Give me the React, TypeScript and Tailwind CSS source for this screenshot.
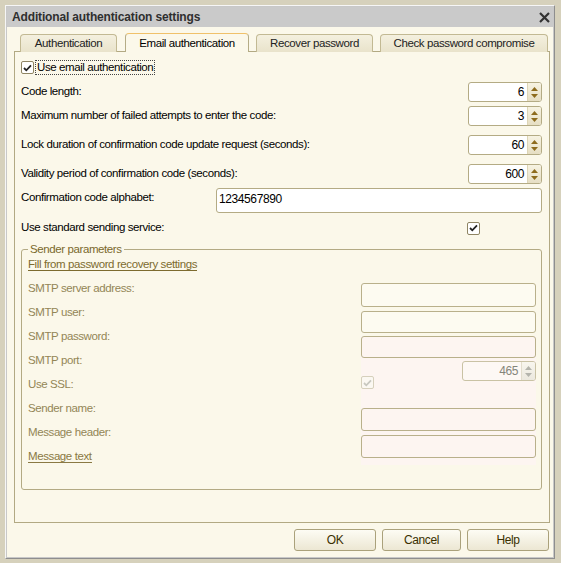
import type { ReactNode } from 'react'

const tabs = [
  { label: 'Authentication', w: 'w-[97px]' },
  { label: 'Email authentication', w: 'w-[124px]', active: true },
  { label: 'Recover password', w: 'w-[117px]' },
  { label: 'Check password compromise', w: 'w-[168px]' },
]

function Arrows({ disabled }: { disabled?: boolean }) {
  const c = disabled ? '#b4b4ac' : '#8d6b1d'
  return (
    <div
      className={
        'flex w-[14px] flex-col items-center justify-center gap-[3px] border-l ' +
        (disabled
          ? 'border-[#e2ddcc] bg-gradient-to-b from-[#f8f6ee] to-[#ebe8de]'
          : 'border-[#ddd5b6] bg-gradient-to-b from-[#f7f3e2] to-[#e6dec3]')
      }
    >
      <svg width="7" height="4" viewBox="0 0 7 4">
        <path d="M0 4 L3.5 0 L7 4 Z" fill={c} />
      </svg>
      <svg width="7" height="4" viewBox="0 0 7 4">
        <path d="M0 0 L3.5 4 L7 0 Z" fill={c} />
      </svg>
    </div>
  )
}

function Spinner({ value, disabled }: { value: string; disabled?: boolean }) {
  return (
    <div
      className={
        'flex h-[20px] w-[74px] overflow-hidden rounded-[3px] border ' +
        (disabled ? 'border-[#c9c2a4] bg-[#fdf8f4]' : 'border-[#b4ab84] bg-white')
      }
    >
      <div
        className={
          'flex-1 pr-[3px] text-right text-[12px] leading-[18px] ' +
          (disabled ? 'text-[#85857a]' : 'text-black')
        }
      >
        {value}
      </div>
      <Arrows disabled={disabled} />
    </div>
  )
}

function Check({ disabled }: { disabled?: boolean }) {
  return (
    <div
      className={
        'flex h-[13px] w-[13px] shrink-0 items-center justify-center rounded-[2px] border ' +
        (disabled ? 'border-[#d6d0bc] bg-[#fbf8f2]' : 'border-[#8f8563] bg-white')
      }
    >
      <svg width="9" height="8" viewBox="0 0 9 8">
        <path
          d="M1 4 L3.3 6.3 L8 1.3"
          fill="none"
          stroke={disabled ? '#c8c8c0' : '#222'}
          strokeWidth="1.8"
        />
      </svg>
    </div>
  )
}

function Row({ label, mt, children }: { label: string; mt: string; children: ReactNode }) {
  return (
    <div className={'flex items-center justify-between ' + mt}>
      <span>{label}</span>
      {children}
    </div>
  )
}

function Field({ h, pink, mt }: { h: string; pink?: boolean; mt?: string }) {
  return (
    <div
      className={
        'w-full rounded-[3px] border border-[#b9b08b] ' +
        h +
        ' ' +
        (mt ?? '') +
        ' ' +
        (pink ? 'bg-[#fdf5f1]' : 'bg-[#fdfbf1]')
      }
    />
  )
}

function Button({ label, w }: { label: string; w: string }) {
  return (
    <button
      className={
        'h-[22px] rounded-[3px] border border-[#aaa17b] bg-gradient-to-b from-[#fdfcf4] to-[#ece7d3] text-[12px] text-[#3a3000] ' +
        w
      }
    >
      {label}
    </button>
  )
}

export default function App() {
  return (
    <div className="h-[563px] w-[561px] bg-[#d6d1bc] pl-[5px] pt-[5px] font-['Liberation_Sans',Arial,sans-serif] text-[11.5px] tracking-[-0.4px] text-black">
      <div className="h-[554px] w-[550px] border border-[#f6f6f6] border-b-[#8e8e8e] border-r-[#8e8e8e]">
        <div className="flex h-full flex-col border border-[#c8c8c8] bg-[#fbf8ea]">
          {/* title */}
          <div className="flex h-[20px] shrink-0 items-center justify-between bg-[#cacaca] pl-[5px] pr-[3px]">
            <span className="text-[12px] font-bold tracking-[-0.15px] text-[#2f2f2f]">
              Additional authentication settings
            </span>
            <svg width="11" height="11" viewBox="0 0 11 11">
              <path d="M1 1 L10 10 M10 1 L1 10" stroke="#333" strokeWidth="2.2" />
            </svg>
          </div>

          <div className="flex flex-1 flex-col pl-[7px] pt-[6px]">
            {/* tabs */}
            <div className="relative z-10 -mb-px flex h-[19px] gap-[7px] pl-[6px]">
              {tabs.map((t, i) => (
                <div
                  key={t.label}
                  className={
                    'flex items-center justify-center rounded-t-[4px] border border-b-0 pt-[1px] ' +
                    t.w +
                    ' ' +
                    (i === 0 ? 'mr-[1px] ' : '') +
                    (t.active
                      ? 'border-[#b5ac86] border-t-[#f0c16a] bg-[#fbf8ea] text-black'
                      : 'mt-[1px] border-[#c2b993] bg-gradient-to-b from-[#f4f0df] to-[#e9e3cb] text-[#222]')
                  }
                >
                  {t.label}
                </div>
              ))}
            </div>

            {/* panel */}
            <div className="h-[472px] w-[536px] border border-[#b2a983] px-[6px] pr-[7px]">
              <div className="mt-[8px] flex h-[15px] items-center gap-[1px]">
                <Check />
                <span className="border border-dotted border-[#444] px-[1px] leading-[13px]">
                  Use email authentication
                </span>
              </div>

              <Row label="Code length:" mt="mt-[7px]">
                <Spinner value="6" />
              </Row>
              <Row label="Maximum number of failed attempts to enter the code:" mt="mt-[4px]">
                <Spinner value="3" />
              </Row>
              <Row label="Lock duration of confirmation code update request (seconds):" mt="mt-[9px]">
                <Spinner value="60" />
              </Row>
              <Row label="Validity period of confirmation code (seconds):" mt="mt-[9px]">
                <Spinner value="600" />
              </Row>

              <div className="mt-[4px] flex items-center">
                <span className="w-[195px] pb-[6px]">Confirmation code alphabet:</span>
                <div className="flex h-[25px] flex-1 items-start rounded-[3px] border border-[#b4ab84] bg-white pl-[2px] pt-[1px] text-[12px]">
                  1234567890
                </div>
              </div>

              <div className="mt-[8px] flex h-[14px] items-center">
                <span className="w-[446px]">Use standard sending service:</span>
                <Check />
              </div>

              {/* group */}
              <div className="relative mt-[14px] flex h-[241px] rounded-[3px] border border-[#b3aa84] pl-[6px] pr-[5px]">
                <span className="absolute left-[6px] top-[-8px] bg-[#fbf8ea] px-[2px] leading-[14px] text-[#7a682c]">
                  Sender parameters
                </span>
                <div className="flex w-[334px] flex-col pt-[2px] text-[#938656]">
                  <div className="flex h-[24px] items-center">
                    <span className="border-b border-[#7d6b2f] leading-[12px] text-[#7d6b2f]">
                      Fill from password recovery settings
                    </span>
                  </div>
                  {[
                    'SMTP server address:',
                    'SMTP user:',
                    'SMTP password:',
                    'SMTP port:',
                    'Use SSL:',
                    'Sender name:',
                    'Message header:',
                  ].map((l) => (
                    <div key={l} className="flex h-[24px] items-center pt-[1px]">
                      {l}
                    </div>
                  ))}
                  <div className="flex h-[24px] items-center">
                    <span className="border-b border-[#8a7943] leading-[12px] text-[#8a7943]">
                      Message text
                    </span>
                  </div>
                </div>

                <div className="flex w-[175px] flex-col pt-[33px]">
                  <Field h="h-[24px]" />
                  <Field h="h-[22px]" mt="mt-[4px]" />
                  <div className="mt-[3px] flex flex-col bg-[#fdf5f1] pb-[7px]">
                    <Field h="h-[22px]" pink />
                    <div className="mt-[3px] self-end">
                      <Spinner value="465" disabled />
                    </div>
                    <div className="mt-[-5px]">
                      <Check disabled />
                    </div>
                    <Field h="h-[23px]" pink mt="mt-[19px]" />
                    <Field h="h-[23px]" pink mt="mt-[4px]" />
                  </div>
                </div>
              </div>
            </div>

            {/* buttons */}
            <div className="mt-[6px] flex justify-end gap-[6px] pr-[4px]">
              <Button label="OK" w="w-[82px]" />
              <Button label="Cancel" w="w-[79px]" />
              <Button label="Help" w="w-[82px]" />
            </div>
          </div>
        </div>
      </div>
    </div>
  )
}
